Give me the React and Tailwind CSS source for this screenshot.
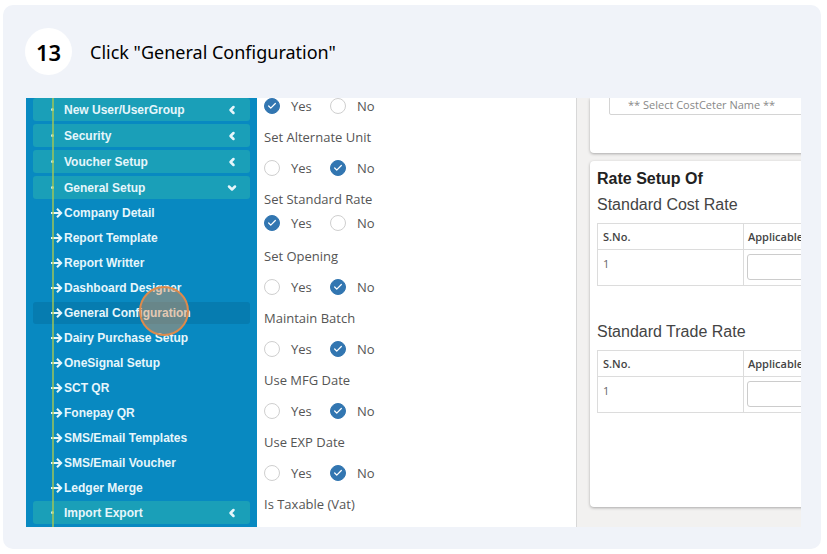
import { Check, ChevronLeft, ChevronDown } from "lucide-react";

const topMenus = ["New User/UserGroup", "Security", "Voucher Setup"];

const setupPages = [
  "Company Detail",
  "Report Template",
  "Report Writter",
  "Dashboard Designer",
  "General Configuration",
  "Dairy Purchase Setup",
  "OneSignal Setup",
  "SCT QR",
  "Fonepay QR",
  "SMS/Email Templates",
  "SMS/Email Voucher",
  "Ledger Merge",
];

const settings = [
  { name: "Set Alternate Unit", value: "No" },
  { name: "Set Standard Rate", value: "Yes", compact: true },
  { name: "Set Opening", value: "No" },
  { name: "Maintain Batch", value: "No" },
  { name: "Use MFG Date", value: "No" },
  { name: "Use EXP Date", value: "No" },
];

function MenuButton({ label, open = false }) {
  const Icon = open ? ChevronDown : ChevronLeft;
  return (
    <button
      type="button"
      aria-expanded={open}
      className="flex h-[23px] w-full shrink-0 items-center rounded-[3px] bg-[#1a9fb8] pr-3 pl-[18px] text-left"
    >
      <span className="size-[3px] rounded-full bg-[#d9f3e6]" />
      <span className="ml-[10px] flex-1">{label}</span>
      <Icon className="size-3" strokeWidth={5} />
    </button>
  );
}

function ArrowIcon() {
  return (
    <svg viewBox="0 0 12 12" className="size-3 shrink-0" fill="none" stroke="currentColor" strokeWidth="2" aria-hidden="true">
      <path d="M0 6h10M6 1.8 10.2 6 6 10.2" />
    </svg>
  );
}

function Sidebar() {
  return (
    <nav aria-label="Setup" className="relative flex w-[231px] shrink-0 flex-col bg-[#0889c1] px-[7px] font-['Liberation_Sans',Arial,sans-serif] text-xs leading-[22px] font-bold text-[#e6f6fb]">
      <div className="flex flex-col gap-[3px]">
        {topMenus.map((label) => (
          <MenuButton key={label} label={label} />
        ))}
        <MenuButton label="General Setup" open />
      </div>
      <ul className="my-[1px]">
        {setupPages.map((label) => (
          <li key={label} className="flex h-[25px] items-center">
            <a
              href="#"
              className={
                label === "General Configuration"
                  ? "relative flex h-[22px] w-full items-center rounded-[3px] bg-[#067cb0] pl-[18px]"
                  : "flex h-[22px] w-full items-center pl-[18px]"
              }
            >
              <ArrowIcon />
              <span className="ml-[1px]">{label}</span>
              {label === "General Configuration" && (
                <span className="absolute -top-4 left-[106px] size-[50px] rounded-full border-2 border-[#dd8a4c] bg-[#e0935a]/45" />
              )}
            </a>
          </li>
        ))}
      </ul>
      <MenuButton label="Import Export" />
      <span className="absolute inset-y-0 left-[26px] w-[2px] bg-[#a8c850]/70" />
    </nav>
  );
}

function Choice({ group, label, checked }) {
  return (
    <label className="flex w-[66px] items-center gap-[11px]">
      <span className="grid size-4 shrink-0">
        <input
          type="radio"
          name={group}
          defaultChecked={checked}
          className="peer col-start-1 row-start-1 size-4 appearance-none rounded-full border border-[#cfcfcf] bg-white checked:border-[#3276b1] checked:bg-[#3276b1]"
        />
        <Check className="pointer-events-none invisible col-start-1 row-start-1 size-[10px] place-self-center text-white peer-checked:visible" strokeWidth={3} />
      </span>
      {label}
    </label>
  );
}

function YesNo({ group, value }) {
  return (
    <div className="flex h-5 items-center">
      <Choice group={group} label="Yes" checked={value === "Yes"} />
      <Choice group={group} label="No" checked={value === "No"} />
    </div>
  );
}

function Settings() {
  return (
    <section className="w-[320px] shrink-0 border-r border-[#d8d8d8] bg-white pl-[7px] text-[13px] leading-5 text-[#555]">
      <div className="-mt-[2px]">
        <YesNo group="first" value="Yes" />
      </div>
      {settings.map(({ name, value, compact }) => (
        <fieldset key={name} className={compact ? "mt-[11px] mb-[13px]" : "mt-[11px]"}>
          <legend>{name}</legend>
          <div className={compact ? "mt-1" : "mt-[11px]"}>
            <YesNo group={name} value={value} />
          </div>
        </fieldset>
      ))}
      <p className="mt-[11px]">Is Taxable (Vat)</p>
    </section>
  );
}

function RateTable({ title }) {
  return (
    <table className="w-[360px] table-fixed border-collapse text-left text-[11px] leading-4 text-[#444]">
      <caption className="pt-[1px] pb-[6px] text-left font-['Liberation_Sans',Arial,sans-serif] text-base leading-6 text-[#444]">{title}</caption>
      <thead>
        <tr className="h-[26px]">
          <th className="w-[146px] border border-[#dcdcdc] px-[5px] font-semibold">S.No.</th>
          <th className="border border-[#dcdcdc] px-1 font-semibold">Applicable</th>
        </tr>
      </thead>
      <tbody>
        <tr className="h-9 align-top">
          <td className="border border-[#dcdcdc] px-[5px] pt-[6px] text-[#666]">1</td>
          <td className="border border-[#dcdcdc] px-[3px] py-1">
            <input aria-label={title + " applicable"} className="block h-[26px] w-full rounded-[3px] border border-[#ccc] bg-white" />
          </td>
        </tr>
      </tbody>
    </table>
  );
}

function Rates() {
  return (
    <section className="min-w-0 flex-1 overflow-hidden bg-[#f2f1f0] pl-[13px]">
      <div className="flow-root h-[55px] w-[400px] rounded-b-[4px] bg-white pl-[19px] shadow-[0_1px_3px_rgba(0,0,0,0.3)]">
        <select aria-label="Cost center" className="-mt-1 block h-[21px] w-[360px] appearance-none rounded-[2px] border border-[#d4d4d4] bg-white pl-[18px] text-[11px] leading-4 text-[#888]">
          <option>** Select CostCeter Name **</option>
        </select>
      </div>
      <div className="mt-2 h-[346px] w-[400px] rounded-[4px] bg-white pt-[5px] pl-[7px] shadow-[0_1px_3px_rgba(0,0,0,0.3)]">
        <h2 className="font-['Liberation_Sans',Arial,sans-serif] text-base leading-[26px] font-bold text-[#222]">Rate Setup Of</h2>
        <RateTable title="Standard Cost Rate" />
        <div className="mt-[33px]">
          <RateTable title="Standard Trade Rate" />
        </div>
      </div>
    </section>
  );
}

export default function App() {
  return (
    <div className="min-h-screen bg-white pt-[5px] pr-[6px] pb-[5px] pl-[3px] font-['Open_Sans','Noto_Sans',sans-serif]">
      <main className="rounded-[10px] bg-[#f0f3f9] pt-[23px] pr-5 pb-[22px] pl-[23px]">
        <header className="flex items-center gap-[18px] font-['Noto_Sans',sans-serif] text-black">
          <span className="-ml-[1px] flex size-[47px] items-center justify-center rounded-full bg-white text-[22px] leading-7 font-semibold">13</span>
          <h1 className="text-lg leading-7">Click "General Configuration"</h1>
        </header>
        <div className="mt-[23px] flex h-[429px] overflow-hidden bg-white">
          <Sidebar />
          <Settings />
          <Rates />
        </div>
      </main>
    </div>
  );
}
